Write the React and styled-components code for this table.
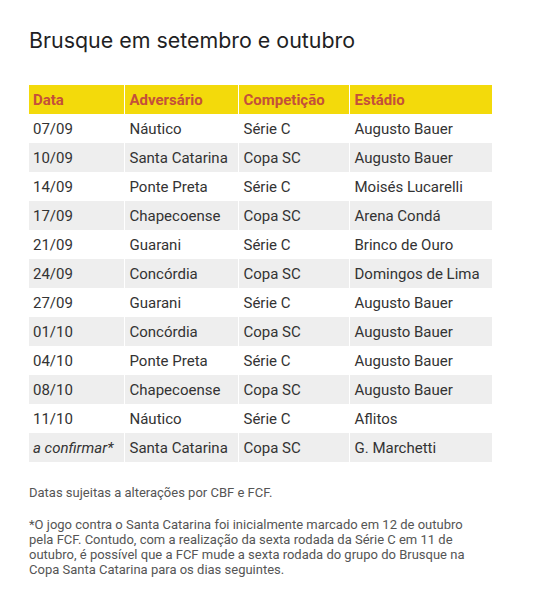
import React from "react";
import styled, { createGlobalStyle } from "styled-components";

const Global = createGlobalStyle`
  html, body { margin: 0; padding: 0; background: #fff; }
  body { font-family: Roboto, "Liberation Sans", sans-serif; }
`;

const Page = styled.div`
  width: 550px;
  padding: 26px 29px 0 29px;
  box-sizing: border-box;
`;

const Title = styled.h2`
  margin: 0 0 31px 0;
  font-family: Inter, "Open Sans", sans-serif;
  font-weight: 400;
  font-size: 21.4px;
  line-height: 28px;
  color: #1f1f24;
`;

const Table = styled.table`
  width: 463px;
  border-collapse: collapse;
  font-size: 15px;
`;

const HeadCell = styled.th`
  background: #f3da0b;
  color: #c4503a;
  font-weight: 700;
  text-align: left;
  height: 29px;
  padding: 0 0 0 5px;
  border-left: 1px solid #fff;
  &:first-child { border-left: none; padding-left: 4px; }
`;

const Row = styled.tr`
  background: ${(p) => (p.$alt ? "#eeeeee" : "#ffffff")};
`;

const Cell = styled.td`
  color: #333;
  height: 29px;
  padding: 0 0 0 5px;
  white-space: nowrap;
  font-style: ${(p) => (p.$italic ? "italic" : "normal")};
  border-left: 1px solid #fff;
  &:first-child { border-left: none; padding-left: 4px; }
`;

const Note = styled.p`
  margin: ${(p) => p.$mt} 0 0 0;
  max-width: 452px;
  font-size: 13px;
  line-height: 15px;
  color: #555;
`;

const rows = [
  ["07/09", "Náutico", "Série C", "Augusto Bauer"],
  ["10/09", "Santa Catarina", "Copa SC", "Augusto Bauer"],
  ["14/09", "Ponte Preta", "Série C", "Moisés Lucarelli"],
  ["17/09", "Chapecoense", "Copa SC", "Arena Condá"],
  ["21/09", "Guarani", "Série C", "Brinco de Ouro"],
  ["24/09", "Concórdia", "Copa SC", "Domingos de Lima"],
  ["27/09", "Guarani", "Série C", "Augusto Bauer"],
  ["01/10", "Concórdia", "Copa SC", "Augusto Bauer"],
  ["04/10", "Ponte Preta", "Série C", "Augusto Bauer"],
  ["08/10", "Chapecoense", "Copa SC", "Augusto Bauer"],
  ["11/10", "Náutico", "Série C", "Aflitos"],
  ["a confirmar*", "Santa Catarina", "Copa SC", "G. Marchetti"],
];

const widths = [95, 114, 111, 143];

export default function App() {
  return (
    <>
      <Global />
      <Page>
        <Title>Brusque em setembro e outubro</Title>
        <Table>
          <colgroup>
            {widths.map((w, i) => (
              <col key={i} style={{ width: w }} />
            ))}
          </colgroup>
          <thead>
            <tr>
              <HeadCell>Data</HeadCell>
              <HeadCell>Adversário</HeadCell>
              <HeadCell>Competição</HeadCell>
              <HeadCell>Estádio</HeadCell>
            </tr>
          </thead>
          <tbody>
            {rows.map((r, i) => (
              <Row key={i} $alt={i % 2 === 1}>
                {r.map((c, j) => (
                  <Cell key={j} $italic={i === rows.length - 1 && j === 0}>
                    {c}
                  </Cell>
                ))}
              </Row>
            ))}
          </tbody>
        </Table>
        <Note $mt="23px">Datas sujeitas a alterações por CBF e FCF.</Note>
        <Note $mt="17px">
          *O jogo contra o Santa Catarina foi inicialmente marcado em 12 de outubro
          pela FCF. Contudo, com a realização da sexta rodada da Série C em 11 de
          outubro, é possível que a FCF mude a sexta rodada do grupo do Brusque na
          Copa Santa Catarina para os dias seguintes.
        </Note>
      </Page>
    </>
  );
}
